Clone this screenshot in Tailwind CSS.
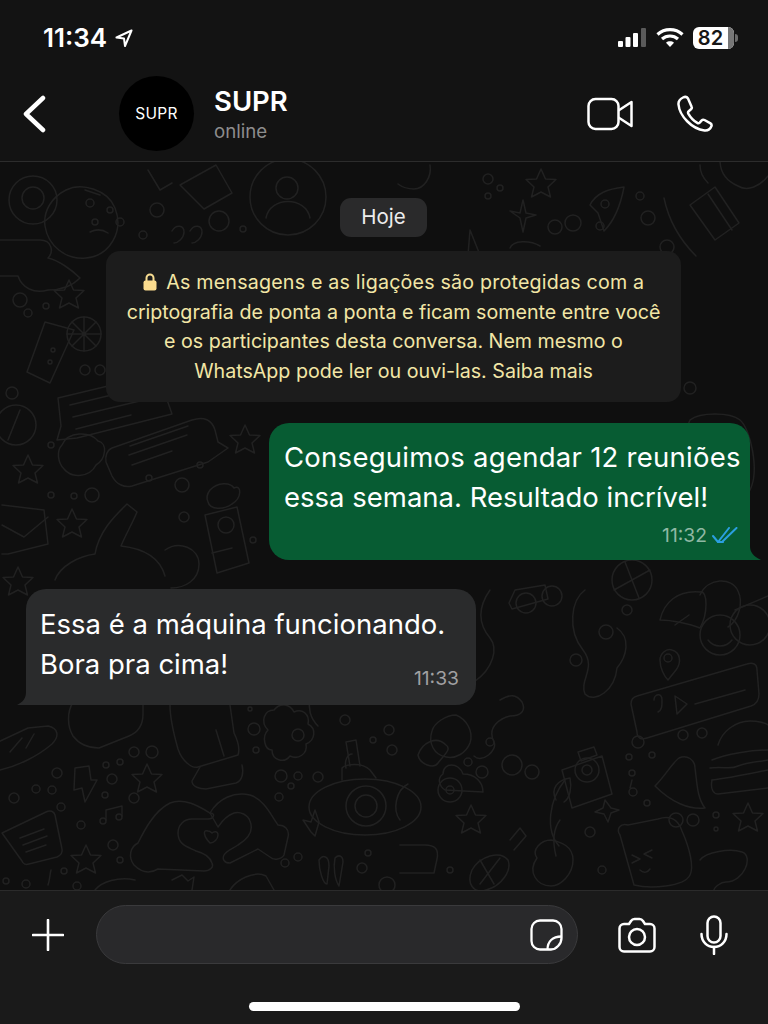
<!DOCTYPE html>
<html lang="pt-BR">
<head>
    <meta charset="UTF-8">
    <meta name="viewport" content="width=device-width, initial-scale=1.0">
    <title>SUPR</title>
    <script src="https://cdn.jsdelivr.net/npm/@tailwindcss/browser@4"></script>
</head>
<body class="bg-[#121212] font-['Inter','Liberation_Sans',sans-serif] text-white">
    <div class="flex flex-col w-[768px] h-[1024px] overflow-hidden">
        <!-- Status bar + contact header -->
        <header class="h-[162px] shrink-0 bg-[#131313] border-b border-[#2c2c2c]">
            <div class="flex items-center justify-between h-[76px] pl-[43px] pr-[30px] pb-[1px]">
                <div class="flex items-center gap-[8px]">
                    <span class="text-[26px] font-semibold tracking-[0px] leading-none">11:34</span>
                    <svg class="w-[18px] h-[18px]" viewBox="0 0 18 18" fill="none" stroke="#fff" stroke-width="2" stroke-linejoin="round"><path d="M16.5 1.5 1.5 8.5l7.5 1 1 7.5z"/></svg>
                </div>
                <div class="flex items-center">
                    <svg class="w-[29px] h-[20px] mr-[9px]" viewBox="0 0 29 20"><rect x="0" y="13" width="5" height="6" rx="1" fill="#fff"/><rect x="7.500" y="9" width="5" height="10" rx="1" fill="#fff"/><rect x="15" y="5" width="5" height="14" rx="1" fill="#fff"/><rect x="23" y="0" width="5" height="19" rx="1" fill="#5a5a5a"/></svg>
                    <svg class="w-[28px] h-[21px] mr-[9px]" viewBox="0 0 28 21" fill="none" stroke="#fff" stroke-width="3.200"><path d="M1.500 7.500c7-6.500 18-6.500 25 0"/><path d="M6 12c4.500-4 11.500-4 16 0"/><path d="M14 20l-4-4.300c2.200-1.800 5.800-1.800 8 0z" fill="#fff" stroke="none"/></svg>
                    <div class="flex items-center">
                        <div class="flex w-[41px] h-[22px] rounded-[6px] overflow-hidden bg-white">
                            <span class="w-[35px] text-[#161616] text-[20px] font-semibold leading-[22px] text-center">82</span>
                            <span class="w-[6px] bg-[#777]"></span>
                        </div>
                        <div class="w-[3px] h-[8px] ml-[1px] rounded-r-full bg-[#6b6b6b]"></div>
                    </div>
                </div>
            </div>
            <div class="flex items-center h-[75px] pl-[22px]">
                <svg class="w-[24px] h-[38px] shrink-0" viewBox="0 0 24 38" fill="none" stroke="#fff" stroke-width="4.500" stroke-linecap="round" stroke-linejoin="round"><path d="M21 3 4 19l17 16"/></svg>
                <div class="flex items-center justify-center w-[75px] h-[75px] ml-[73px] rounded-full bg-black shrink-0">
                    <span class="text-[15.500px] font-normal tracking-[0.3px]">SUPR</span>
                </div>
                <div class="ml-[20px] w-[341px] mt-[3px]">
                    <div class="text-[27.500px] font-semibold leading-[32px]">SUPR</div>
                    <div class="text-[18.700px] leading-[29px] text-[#8d8d8d]">online</div>
                </div>
                <svg class="w-[46px] h-[34px] ml-[32px] shrink-0" viewBox="0 0 46 34" fill="none" stroke="#fff" stroke-width="2.500" stroke-linejoin="round"><rect x="1.500" y="2" width="30" height="30" rx="7"/><path d="M31.500 13.500 44.500 5v24l-13-8.500"/></svg>
                <svg class="w-[38px] h-[38px] ml-[43px] shrink-0" viewBox="0 0 38 38" fill="none" stroke="#fff" stroke-width="2.500" stroke-linejoin="round"><path d="M7 2.500c-3 1.500-4.800 4-4.500 7C3.500 21 16 34 28.500 35.500c3 .3 5.800-1.500 7-4.500.3-1-.1-2-1-2.600l-6-3.400c-1-.5-2-.4-2.800.4l-2 2.200c-.7.700-1.600.8-2.400.3-3.500-2-7-5.700-9-9.300-.4-.8-.3-1.700.4-2.300l2.300-2c.8-.7 1-1.800.5-2.700L12 3.500c-1-1.600-3-2-5-1z"/></svg>
            </div>
        </header>

        <!-- Conversation -->
        <main class="relative flex-1 bg-[#0f0f0f] overflow-hidden">
            <svg class="absolute inset-0 w-[768px] h-[728px]" viewBox="0 162 768 728" fill="none" stroke="#212121" stroke-width="1.500" stroke-linecap="round" stroke-linejoin="round">
                <defs>
                    <path id="star" d="M0-15 4.500-5 15-4.500 7 3 9.500 13 0 8-9.500 13-7 3-15-4.500-4.500-5z"/>
                </defs>
                <!-- top row -->
                <circle cx="288" cy="197" r="38"/><circle cx="287" cy="188" r="11"/><path d="M266 218c4-22 40-22 44 0"/>
                <path d="M66 190c16-8 42 0 49 18 9 23-5 48-29 50-20 2-38-12-41-32-2-15 7-29 21-36z"/>
                <circle cx="90" cy="203" r="4"/><circle cx="110" cy="210" r="3"/><circle cx="95" cy="222" r="3"/><circle cx="120" cy="222" r="4"/><path d="M90 232c6-3 12-3 18 1"/><path d="M85 190l15 5"/>
                <circle cx="33" cy="200" r="24"/><circle cx="33" cy="198" r="11"/>
                <circle cx="157" cy="210" r="7"/><circle cx="219" cy="221" r="10"/><circle cx="243" cy="229" r="3"/><circle cx="143" cy="235" r="4"/>
                <path d="M172 231c4-7 12-6 12 1 0 6-6 11-10 11"/><path d="M190 231c4-7 12-6 12 1 0 6-6 11-10 11"/>
                <path d="M180 185l36-20 16 28-28 16z"/><path d="M148 170l12 20 12-7"/>
                <path d="M0 240h40c12 0 14 12 8 18 10 2 24 12 32 20-8 8-20 12-32 12-14 4-26-2-30-14H0"/>
                <use href="#star" x="69" y="295"/>
                <circle cx="20" cy="300" r="7"/><circle cx="28" cy="313" r="4"/><circle cx="46" cy="306" r="3"/>
                <path d="M45 322 74 330 50 383 27 372z"/><circle cx="84" cy="334" r="17"/><path d="M84 317v34M67 334h34M72 322l24 24M72 346l24-24"/>
                <circle cx="53" cy="350" r="2"/><circle cx="50" cy="362" r="2"/>
                <circle cx="85" cy="370" r="5"/><circle cx="100" cy="370" r="5"/>
                <circle cx="16" cy="425" r="20"/><circle cx="12" cy="393" r="6"/><path d="M8 440l12-30"/>
                <path d="M58 398l100-24 14 40-95 24-20 2 4-14z"/><path d="M70 405l75-18M73 417l75-18M76 429l55-14"/>
                <path d="M112 448l80-28c12-4 20 0 23 10l3 12 10 6-20 14-76 24c-8 2-16-2-20-10l-6-14c-1-6 1-12 6-14z"/>
                <path d="M130 446l58-20M129 455l58-20M132 465l40-14"/>
                <use href="#star" x="245" y="440"/>
                <path d="M62 445c6-14 28-14 36-4 10 2 8 18-2 24-6 12-24 14-32 4-6-6-8-18-2-24z"/>
                <use href="#star" x="28" y="470"/>
                <circle cx="51" cy="445" r="3"/><circle cx="149" cy="478" r="3"/><circle cx="182" cy="485" r="7"/><circle cx="200" cy="465" r="3"/>
                <path d="M210 490c8-8 20-8 24-2 8-4 8 10-2 16-8 6-22 6-24-2-2-4-1-8 2-12z"/>
                <path d="M2 505 44 510l4 34-40 10L2 554"/><path d="M2 525l22 12 24-20"/>
                <use href="#star" x="72" y="524"/>
                <circle cx="92" cy="495" r="7"/><circle cx="74" cy="496" r="3"/><circle cx="51" cy="495" r="3"/>
                <path d="M55 580c5-14 24-24 40-26 4-24 22-40 32-50l10 8c-4 10-12 24-16 34 18 2 38 8 44 30"/>
                <path d="M165 550c14-10 34-2 34 14s-14 24-28 24"/>
                <path d="M205 515l32-8 12 56-32 10z"/><circle cx="226" cy="525" r="8"/><path d="M212 553l20-5"/>
                <circle cx="184" cy="517" r="5"/><circle cx="253" cy="540" r="3"/>
                <use href="#star" x="18" y="582"/>
                <!-- top right -->
                <path d="M430 165c2 12-6 24-16 24-6 0-12-2-16-5"/>
                <circle cx="488" cy="179" r="5"/><circle cx="500" cy="188" r="3"/><circle cx="488" cy="196" r="3"/>
                <use href="#star" x="541" y="184"/>
                <path d="M510 211l10 2 3-13 3 13 10 2-10 3-3 14-3-14z"/>
                <path d="M590 205c6-12 18-16 34-18-3 16-8 32-20 44l-6-18z"/><circle cx="605" cy="204" r="4"/>
                <circle cx="640" cy="196" r="4"/><circle cx="648" cy="218" r="7"/>
                <circle cx="555" cy="227" r="7"/><circle cx="573" cy="223" r="8"/><circle cx="600" cy="226" r="4"/>
                <path d="M470 230l10 25h-12z"/><path d="M510 248c3-8 20-8 30-2"/>
                <circle cx="667" cy="247" r="7"/><path d="M664 198c5 24 16 42 32 58"/>
                <path d="M690 205l25-18 24 36-24 17z"/><path d="M708 194l24 36"/>
                <path d="M720 160c0 10 4 20 18 26 10 6 22 0 30-10"/>
                <path d="M700 165c0 6 2 12 8 18"/>
                <!-- right middle -->
                <path d="M690 420c10-8 40-8 50 0s20 50 10 70-50 24-62 6-6-60 2-76z"/><circle cx="727" cy="448" r="14"/>
                <circle cx="690" cy="388" r="6"/>
                <!-- below the received message -->
                <path d="M490 590c-14 20-10 36 0 48 8 10 4 30-16 44"/>
                <path d="M515 590 545 585l3 14-36 10-3-6 6-13z"/><circle cx="526" cy="603" r="10"/><circle cx="552" cy="596" r="10"/>
                <circle cx="632" cy="580" r="20"/><path d="M614 590 650 570M625 562l14 36"/>
                <path d="M585 590c-14 10-18 40-2 60 14 18-4 30 2 44 10 10 30-4 32-26 10-12 14-30 0-40"/>
                <circle cx="576" cy="660" r="6"/><circle cx="606" cy="632" r="7"/><circle cx="627" cy="610" r="5"/>
                <path d="M660 620c4-18 18-30 40-28 8-2 8 22 0 36-10-4-28-8-40-8z"/><path d="M675 625l14-10"/>
                <path d="M700 595c8-18 32-18 38-4 6 12 0 30-10 36"/>
                <circle cx="720" cy="635" r="20"/><path d="M708 640c6 8 18 8 24 0"/>
                <circle cx="750" cy="625" r="20"/><path d="M735 610l33-14"/>
                <path d="M660 660c0-6 6-12 12-10 8 2 10 12 4 20l-8 10c-4-4-8-12-8-20z"/><circle cx="668" cy="658" r="4"/>
                <path d="M637 696l110-32c6-2 10 0 10 6l2 24c0 6-2 10-8 12l-104 32c-6 2-10 0-10-6l-6-28c0-4 2-7 6-8z"/>
                <path d="M654 700c0-6 8-8 8 0 0 6 0 10-4 12"/><path d="M675 696l12 8-10 10z"/><path d="M695 704l50-14"/>
                <path d="M500 700c10-6 16-6 22 2 4 8 0 14-12 14-8 2-24 10-16 26 4 8-12 22-20 14"/>
                <path d="M456 715c10 4 18 16 14 28-4 10-14 16-24 14-12-2-18-14-14-26 2-8 14-16 24-16z"/><circle cx="490" cy="742" r="4"/>
                <path d="M418 755c4-12 18-20 28-10 6 4-2 10-8 18-4 6-18 2-20-8z"/>
                <circle cx="468" cy="762" r="4"/>
                <path d="M445 790c-6-4-8-12-2-16 0-12 16-12 20 0 12 0 20 8 20 18z"/><circle cx="512" cy="765" r="10"/><circle cx="532" cy="772" r="7"/><circle cx="482" cy="772" r="6"/>
                <use href="#star" x="471" y="820"/>
                <circle cx="450" cy="790" r="12"/><circle cx="450" cy="790" r="4"/>
                <path d="M562 770l40-14 10 38-40 14z"/><path d="M578 752l16-5 3 8-16 6z"/><circle cx="587" cy="770" r="12"/><circle cx="587" cy="770" r="5"/>
                <circle cx="638" cy="742" r="6"/><circle cx="629" cy="757" r="3"/><circle cx="632" cy="773" r="3"/><circle cx="652" cy="755" r="3"/>
                <circle cx="633" cy="792" r="4"/><circle cx="647" cy="803" r="3"/>
                <path d="M632 780l-2 8"/>
                <path d="M655 786c10-10 18-24 24-28 8-4 16 2 16 10 2 14 2 30 10 40-16 2-34-6-50-22z"/>
                <circle cx="683" cy="735" r="5"/><circle cx="702" cy="733" r="5"/>
                <!-- burger -->
                <path d="M718 745c4-14 18-24 32-24 8 0 16 2 18 4"/><path d="M712 760c14-6 40-10 56-10"/><path d="M710 768c14-2 20 2 28-2 10-4 20-4 30-6"/><path d="M712 780c18-2 36-6 56-10"/><path d="M712 780c-2 10 2 14 6 14l50-6"/>
                <path d="M605 800l6 8 8 2-8 3-3 9-4-8-9-2 8-4z"/>
                <use href="#star" x="748" y="818"/>
                <circle cx="676" cy="820" r="7"/><circle cx="693" cy="820" r="6"/><circle cx="716" cy="815" r="3"/><circle cx="716" cy="829" r="2"/>
                <path d="M620 835c-4-6 0-12 8-10l30-6c12-4 20 0 24 12 8 18 12 36 8 44-6 12-40 14-56 10z"/>
                <path d="M632 855l8 4-8 4M652 850l-8 4 8 4"/><path d="M640 870c4 4 8 2 10-1"/>
                <circle cx="602" cy="870" r="4"/><circle cx="590" cy="832" r="5"/>
                <path d="M700 860c6-8 30-12 42-8s2 30-16 30c-6 0-12 6-12 8"/>
                <path d="M565 780c-16 20-20 50-6 66"/>
                <path d="M556 800c-6-12 2-20 14-22 2 10 0 20-6 24"/>
                <path d="M537 858c-6-8 4-18 14-18 10 2 22 6 22 20 0 14-12 26-22 26-14 0-24-14-14-28z"/><path d="M560 820c-6 8-8 20-4 36"/>
                <path d="M472 870c8-14 28-20 36-10 4 10-6 26-22 30-12 4-20-6-14-20z"/><path d="M480 860l14 24M500 858l-20 26"/><path d="M510 840l10-12 6 8-12 14"/>
                <circle cx="450" cy="870" r="3"/>
                <path d="M400 845h25c10 0 14 4 12 14l-3 14h-34"/>
                <path d="M400 820c-8-10-4-30 8-36"/>
                <!-- bottom left and middle -->
                <path d="M0 770c18-4 38-14 52-26 8-8 6-16-4-18l-20 2-30 14"/><path d="M10 752l12-14M26 748l8-14"/>
                <path d="M73 702c-6 10-6 24 0 34 6 8 14 12 26 12l30-12c10-4 14-12 14-22v-12"/>
                <path d="M170 705c0 10 4 30 8 44 4 12 14 20 20 18l40-12c2-6 0-14-4-22l-4-28"/>
                <path d="M200 767l-8 14c0 6 8 8 14 8l30-6c6-2 8-10 6-18"/>
                <path d="M216 730l8 26"/>
                <circle cx="57" cy="773" r="5"/><circle cx="36" cy="789" r="4"/><circle cx="52" cy="790" r="4"/><circle cx="14" cy="798" r="5"/><circle cx="61" cy="807" r="4"/>
                <path d="M75 768l14-2 2 14h6l-12 22-3-14-8 2z"/>
                <circle cx="134" cy="752" r="5"/><circle cx="152" cy="752" r="6"/><circle cx="106" cy="765" r="3"/><circle cx="120" cy="762" r="3"/><circle cx="112" cy="779" r="5"/><circle cx="134" cy="798" r="5"/><circle cx="105" cy="795" r="3"/>
                <use href="#star" x="147" y="779"/>
                <path d="M106 820v-10l16-4v10"/><circle cx="103" cy="821" r="3"/><circle cx="119" cy="817" r="3"/>
                <circle cx="81" cy="825" r="4"/>
                <path d="M2 833 46 812c4-2 8-1 9 3l7 34c1 4-1 6-5 8l-28 7c-3 1-6 0-7-3z"/><path d="M20 838l24-9M23 845l24-9M26 852l20-7"/>
                <use href="#star" x="86" y="860"/>
                <circle cx="113" cy="845" r="5"/><circle cx="120" cy="860" r="3"/><circle cx="64" cy="871" r="3"/><circle cx="6" cy="881" r="3"/><circle cx="26" cy="884" r="4"/><circle cx="77" cy="886" r="4"/>
                <path d="M48 885c2-6 2-12 3-15"/>
                <!-- heart hands -->
                <path d="M210 813c-10-6-26-16-40-10-16 8-26 28-32 40-8 4-10 14-4 22 6 6 14 10 24 4l46 2c6 0 10-4 8-8-2-6-8-10-16-12-8-4-18-6-18-18 0-8 6-14 14-14h16c6 0 8-6 2-6z"/>
                <path d="M210 813c8-14 24-22 40-18 14 4 22 22 28 30 6 0 12 4 10 12l-4 18c-2 4-10 6-14 2l-12-8-28 14c-6 0-8-4-6-8 2-4 8-6 14-10 10-6 16-14 12-24-2-6-10-10-16-8-6 2-12 8-16 14z"/>
                <path d="M210 843c-6-6-8-14-2-12 2 0 4 2 4 2 2-2 6-2 6 2s-4 8-8 8z"/>
                <!-- eye / submarine -->
                <ellipse cx="365" cy="807" rx="56" ry="28"/><circle cx="366" cy="806" r="20"/><circle cx="366" cy="806" r="11"/>
                <path d="M342 780v-12c4-4 20-6 28 2l6 8"/><path d="M350 766l-4-24 10-2 4 26"/>
                <path d="M303 820l8 2 4-12 4 12-4 14-4-4z"/>
                <circle cx="281" cy="776" r="6"/><circle cx="298" cy="776" r="4"/><circle cx="318" cy="777" r="5"/><circle cx="291" cy="786" r="3"/><circle cx="279" cy="797" r="4"/><circle cx="298" cy="857" r="4"/><circle cx="285" cy="863" r="4"/>
                <path d="M319 860c4-6 10-4 10 6l-2 18c-4 0-8-14-8-24z"/><path d="M335 858c4-4 8-2 8 4l-4 24c-4-6-6-18-4-28z"/>
                <circle cx="362" cy="868" r="5"/><circle cx="368" cy="853" r="3"/>
                <path d="M268 730c-8-8-4-20 6-20 6-8 16-6 20 2 8-4 16 2 14 12 8 4 8 16-2 20 2 10-8 16-16 12-6 8-18 4-18-6-8 0-10-14-4-20z"/><circle cx="298" cy="735" r="6"/>
                <circle cx="254" cy="729" r="6"/><circle cx="256" cy="750" r="3"/><circle cx="250" cy="709" r="2"/>
                <circle cx="345" cy="720" r="5"/><circle cx="389" cy="730" r="5"/><circle cx="392" cy="750" r="5"/><circle cx="373" cy="740" r="3"/>
                <path d="M346 768c-2-8 2-14 6-14"/>
                <path d="M95 890c6-8 24-14 40-10"/><path d="M230 890c6-10 24-20 36-14l8 14"/>
                <path d="M172 880l10-5 6 6 6-4-2 13"/>
                <circle cx="387" cy="885" r="8"/>
                <path d="M310 700c-2 8 0 18 8 26"/>
            </svg>

            <div class="relative flex flex-col items-start pt-[36px] pl-[106px]">
                <div class="flex items-center justify-center w-[87px] h-[39px] ml-[234px] rounded-[11px] bg-[#2a2a2b] text-[20.500px] text-[#ececec]">Hoje</div>
                <div class="w-[575px] h-[151px] mt-[14px] pt-[17px] rounded-[14px] bg-[#1c1c1c] text-[#f2e6a6] text-[19.650px] leading-[29.500px] text-center">
                    <svg class="inline-block w-[14px] h-[18px] mr-[4px] mb-[4px]" viewBox="0 0 14 18"><path d="M3.500 8V5a3.500 3.500 0 0 1 7 0v3" fill="none" stroke="#f8dd92" stroke-width="2"/><rect x="0.500" y="7.500" width="13" height="10" rx="2" fill="#fbdc8e"/></svg>
                    <span class="tracking-[0.2px]">As mensagens e as ligações são protegidas com a</span><br>
                    criptografia de ponta a ponta e ficam somente entre você<br>
                    e os participantes desta conversa. Nem mesmo o<br>
                    WhatsApp pode ler ou ouvi-las. Saiba mais
                </div>
            </div>

            <div class="relative flex justify-end mt-[21px] pr-[18px]">
                <div class="relative w-[481px] h-[137px] pt-[14px] pl-[15px] rounded-[20px] rounded-br-none bg-[#075c33]">
                    <p class="text-[27.500px] leading-[40px] whitespace-nowrap"><span class="tracking-[0.26px]">Conseguimos agendar 12 reuniões</span><br>essa semana. Resultado incrível!</p>
                    <div class="flex items-center justify-end gap-[5px] h-[24px] mt-[6px] pr-[12px]">
                        <span class="text-[19.300px] text-[#8fb8a3]">11:32</span>
                        <svg class="w-[26px] h-[17px]" viewBox="0 0 26 17" fill="none" stroke="#2b9fe0" stroke-width="2" stroke-linecap="round" stroke-linejoin="round"><path d="M1 9l5 6L17 1"/><path d="M10 15 24.500 1"/><path d="M6 15h5"/></svg>
                    </div>
                    <svg class="absolute left-full bottom-0 w-[11px] h-[14px]" viewBox="0 0 11 14"><path d="M0 0c0 6 3 10 11 14H0z" fill="#075c33"/></svg>
                </div>
            </div>

            <div class="relative flex mt-[29px] pl-[26px]">
                <div class="relative w-[450px] h-[116px] pt-[15px] pl-[14px] rounded-[20px] rounded-bl-none bg-[#2a2b2c]">
                    <p class="text-[27.500px] leading-[40px] whitespace-nowrap">Essa é a máquina funcionando.<br>Bora pra cima!</p>
                    <div class="flex justify-end pr-[17px] -mt-[20px]">
                        <span class="text-[19.300px] leading-[28px] text-[#a0a0a2]">11:33</span>
                    </div>
                    <svg class="absolute right-full bottom-0 w-[9px] h-[13px]" viewBox="0 0 9 13"><path d="M9 0c0 6-3 10-9 13h9z" fill="#2a2b2c"/></svg>
                </div>
            </div>
        </main>

        <!-- Message bar -->
        <footer class="h-[134px] shrink-0 bg-[#1a1a1a] border-t border-[#2b2b2b]">
            <div class="flex items-center pt-[14px]">
                <svg class="w-[32px] h-[32px] ml-[32px] shrink-0" viewBox="0 0 32 32" stroke="#fff" stroke-width="2.600" stroke-linecap="round"><path d="M16 1v30M1 16h30"/></svg>
                <div class="flex items-center justify-end w-[482px] h-[59px] ml-[32px] pr-[14px] rounded-full bg-[#29292b] border border-[#3a3a3c] shrink-0">
                    <svg class="w-[33px] h-[32px]" viewBox="0 0 33 32" fill="none" stroke="#fff" stroke-width="2.300" stroke-linejoin="round"><path d="M21 30.500H10A8.500 8.500 0 0 1 1.500 22V10A8.500 8.500 0 0 1 10 1.500h13A8.500 8.500 0 0 1 31.500 10v9C31.500 25 26 30.500 21 30.500z"/><path d="M17.500 30.500c0-8 5-13 14-13"/></svg>
                </div>
                <svg class="w-[38px] h-[36px] ml-[40px] shrink-0" viewBox="0 0 38 36" fill="none" stroke="#fff" stroke-width="2.500" stroke-linejoin="round"><path d="M6 7h5l2-3c1-1.500 2-2 3.500-2h5c1.500 0 2.500.5 3.500 2l2 3h5c2.500 0 4.500 2 4.500 4.500V30c0 2.500-2 4.500-4.500 4.500H6c-2.500 0-4.500-2-4.500-4.500V11.500C1.500 9 3.500 7 6 7z"/><circle cx="19" cy="20" r="8"/></svg>
                <svg class="w-[28px] h-[40px] ml-[44px] shrink-0" viewBox="0 0 28 40" fill="none" stroke="#fff" stroke-width="2.500" stroke-linecap="round"><rect x="7.500" y="1.500" width="13" height="26" rx="6.500"/><path d="M1.500 19c0 7.500 5.500 13 12.500 13s12.500-5.500 12.500-13"/><path d="M14 32v7"/></svg>
            </div>
            <div class="w-[271px] h-[9px] mt-[38px] mx-auto rounded-full bg-white"></div>
        </footer>
    </div>
</body>
</html>
